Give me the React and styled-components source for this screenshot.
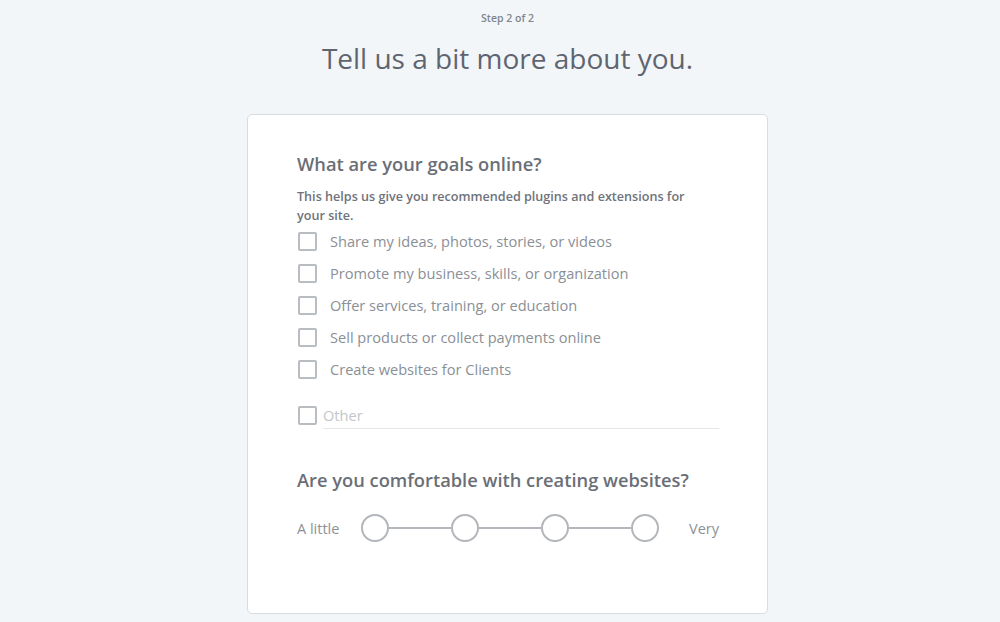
import { createGlobalStyle, styled } from "styled-components"

const GlobalStyle = createGlobalStyle`
html, body {
    margin: 0;
    padding: 0;
    background: #f2f6f8;
    font-family: "Open Sans", "Noto Sans", sans-serif;
}
`

const Page = styled.div`
display: flex;
flex-direction: column;
align-items: center;
padding: 10px 0 0 15px;
height: 612px;
overflow: hidden;
`

const Step = styled.div`
font-size: 10.5px;
line-height: 16px;
font-weight: 600;
color: #80858c;
`

const Title = styled.h1`
margin: 13px 0 37px;
font-size: 28px;
line-height: 38px;
font-weight: 500;
color: #5f6570;
`

const Card = styled.div`
box-sizing: border-box;
width: 521px;
height: 500px;
padding: 37px 48px 0 49px;
background: #ffffff;
border: 1px solid #d9dde0;
border-radius: 5px;
`

const Heading = styled.h2`
margin: ${(p) => p.$top || 0}px 0 0;
font-size: 18.3px;
line-height: 24px;
font-weight: 600;
color: #6a6f77;
`

const Note = styled.p`
margin: 11px 0 0;
max-width: 405px;
font-size: 12.6px;
line-height: 19px;
font-weight: 600;
color: #6f737a;
`

const Options = styled.div`
display: flex;
flex-direction: column;
`

const Option = styled.label`
display: flex;
align-items: center;
height: 32px;
gap: 13px;
font-size: 14.6px;
color: #8a8f96;
`

const Box = styled.span`
box-sizing: border-box;
flex: none;
width: 19px;
height: 19px;
margin-left: 1px;
border: 2px solid #b9bdc1;
border-radius: 2px;
`

const OtherRow = styled.div`
display: flex;
align-items: center;
gap: 6px;
margin-top: 17px;
`

const OtherField = styled.div`
flex: 1;
height: 26px;
line-height: 26px;
font-size: 14.6px;
color: #c2c5c9;
border-bottom: 1px solid #e4e7e9;
`

const Scale = styled.div`
display: flex;
align-items: center;
margin-top: 21px;
height: 30px;
font-size: 14.5px;
color: #8d9197;
`

const Track = styled.div`
display: flex;
align-items: center;
width: 298px;
margin-left: 22px;
`

const Dot = styled.span`
box-sizing: border-box;
flex: none;
width: 28px;
height: 28px;
border: 2px solid #b3b6ba;
border-radius: 50%;
`

const Line = styled.span`
flex: 1;
height: 2px;
background: #b3b6ba;
`

const Very = styled.span`
margin-left: auto;
`

const goals = [
    "Share my ideas, photos, stories, or videos",
    "Promote my business, skills, or organization",
    "Offer services, training, or education",
    "Sell products or collect payments online",
    "Create websites for Clients",
]

function App() {
    return (
        <>
            <GlobalStyle />
            <Page>
                <Step>Step 2 of 2</Step>
                <Title>Tell us a bit more about you.</Title>
                <Card>
                    <Heading>What are your goals online?</Heading>
                    <Note>This helps us give you recommended plugins and extensions for your site.</Note>
                    <Options>
                        {goals.map((g) => (
                            <Option key={g}>
                                <Box />
                                {g}
                            </Option>
                        ))}
                    </Options>
                    <OtherRow>
                        <Box />
                        <OtherField>Other</OtherField>
                    </OtherRow>
                    <Heading $top={39}>Are you comfortable with creating websites?</Heading>
                    <Scale>
                        <span>A little</span>
                        <Track>
                            <Dot />
                            <Line />
                            <Dot />
                            <Line />
                            <Dot />
                            <Line />
                            <Dot />
                        </Track>
                        <Very>Very</Very>
                    </Scale>
                </Card>
            </Page>
        </>
    )
}

export default App
